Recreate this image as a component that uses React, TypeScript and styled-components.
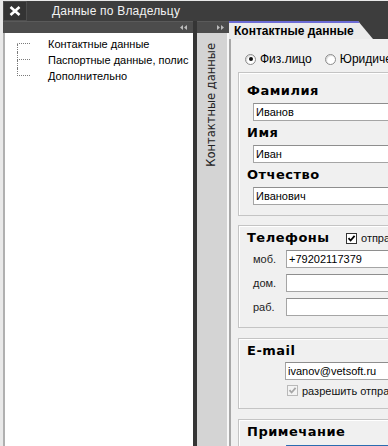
import React from 'react';
import styled, { createGlobalStyle } from 'styled-components';

const Global = createGlobalStyle`
  html, body { margin: 0; padding: 0; background: #e9e9e9; }
  body { font-family: "Liberation Sans", Arial, sans-serif; }
`;

const Window = styled.div`
  width: 388px;
  height: 446px;
  overflow: hidden;
  box-sizing: border-box;
  padding: 1px 0 0 3px;
  background: #e9e9e9;
  display: flex;
  flex-direction: column;
`;

const TitleBar = styled.div`
  flex: none;
  height: 20px;
  background: #3d3d3d;
  display: flex;
  align-items: center;
`;

const CloseBtn = styled.div`
  width: 24px;
  height: 20px;
  box-sizing: border-box;
  border: 1px solid #4d4d4d;
  background: #343434;
  display: flex;
  align-items: center;
  justify-content: center;
`;

const Title = styled.div`
  margin-left: 25px;
  color: #f2f2f2;
  font-size: 12px;
  letter-spacing: 0.2px;
`;

const Body = styled.div`
  flex: 1;
  min-height: 0;
  display: flex;
  background: #3d3d3d;
`;

const LeftPanel = styled.div`
  flex: none;
  width: 194px;
  box-sizing: border-box;
  border-right: 4px solid #353535;
  display: flex;
  flex-direction: column;
`;

const PanelHeader = styled.div<{ $align: 'start' | 'end' }>`
  flex: none;
  height: 12px;
  background: #4c4c4c;
  box-shadow: inset 0 1px 0 #5a5a5a;
  display: flex;
  align-items: center;
  justify-content: ${(p) => (p.$align === 'end' ? 'flex-end' : 'flex-start')};
  padding: 0 5px;
`;

const TreeArea = styled.div`
  flex: 1;
  background: #ffffff;
  border-left: 2px solid #b0b0b0;
  padding: 3px 0 0 12px;
  display: flex;
  flex-direction: column;
`;

const TreeItem = styled.div`
  height: 16px;
  display: flex;
  align-items: center;
  font-size: 11px;
  color: #000;
`;

const Connector = styled.div`
  flex: none;
  width: 13px;
  height: 16px;
  display: flex;
  flex-direction: column;
`;

const ConnTop = styled.div<{ $first?: boolean }>`
  height: 7px;
  border-left: 1px dotted ${(p) => (p.$first ? 'transparent' : '#7a7a7a')};
  border-bottom: 1px dotted #7a7a7a;
`;

const ConnBottom = styled.div<{ $last?: boolean }>`
  flex: 1;
  border-left: 1px dotted ${(p) => (p.$last ? 'transparent' : '#7a7a7a')};
`;

const TreeText = styled.span`
  margin-left: 18px;
  white-space: nowrap;
`;

const Strip = styled.div`
  flex: none;
  width: 32px;
  display: flex;
  flex-direction: column;
`;

const StripBody = styled.div`
  flex: 1;
  background: #d4d4d4;
  border-right: 2px solid #f8f8f8;
  display: flex;
  justify-content: center;
  padding-top: 10px;
`;

const VerticalText = styled.span`
  writing-mode: vertical-rl;
  transform: rotate(180deg);
  font-family: "DejaVu Sans", sans-serif;
  font-size: 11.5px;
  color: #222;
  white-space: nowrap;
  align-self: flex-start;
  margin-right: 2px;
`;

const ContentCol = styled.div`
  flex: 1;
  min-width: 0;
  display: flex;
  flex-direction: column;
  overflow: hidden;
`;

const TabRow = styled.div`
  flex: none;
  height: 18px;
  display: flex;
`;

const Tab = styled.div`
  width: 144px;
  height: 18px;
  box-sizing: border-box;
  border-top: 2px solid #6b6bd4;
  background: #ebebeb;
  clip-path: polygon(0 0, calc(100% - 15px) 0, 100% 100%, 0 100%);
  padding-left: 5px;
  font-weight: bold;
  font-size: 12px;
  line-height: 17px;
  color: #000;
  white-space: nowrap;
`;

const TabBody = styled.div`
  flex: 1;
  background: #f0f0f0;
  border-left: 2px solid #a8a8a8;
  padding: 13px 0 0 7px;
  display: flex;
  flex-direction: column;
`;

const RadioRow = styled.div`
  height: 14px;
  display: flex;
  align-items: center;
  padding-left: 7px;
  font-size: 12px;
  white-space: nowrap;
`;

const RadioOpt = styled.label`
  display: flex;
  align-items: center;
  gap: 4px;
  margin-right: 13px;
`;

const RadioCircle = styled.span<{ $checked?: boolean }>`
  width: 11px;
  height: 11px;
  box-sizing: border-box;
  border-radius: 50%;
  border: 1px solid #8c8c8c;
  background: #fff;
  box-shadow: inset 1px 1px 1px #d8d8d8;
  display: flex;
  align-items: center;
  justify-content: center;
  &::after {
    content: '';
    width: 4px;
    height: 4px;
    border-radius: 50%;
    background: ${(p) => (p.$checked ? '#111' : 'transparent')};
  }
`;

const Group = styled.div<{ $mt: number; $pt: number; $pb: number }>`
  width: 320px;
  flex: none;
  margin-top: ${(p) => p.$mt}px;
  border: 1px solid #c4c4c4;
  box-shadow: inset 1px 1px 0 #ffffff;
  padding: ${(p) => p.$pt}px 0 ${(p) => p.$pb}px 8px;
  display: flex;
  flex-direction: column;
`;

const FieldLabel = styled.div<{ $width?: number; $mt?: number }>`
  height: 16px;
  line-height: 16px;
  margin-top: ${(p) => p.$mt ?? 0}px;
  font-family: "DejaVu Sans", Verdana, sans-serif;
  font-weight: bold;
  font-size: 13px;
  letter-spacing: 0.5px;
  color: #000;
  flex: none;
  ${(p) => (p.$width ? `width: ${p.$width}px;` : '')}
`;

const Input = styled.div<{ $mt?: number; $ml: number; $focus?: boolean }>`
  margin-top: ${(p) => p.$mt ?? 0}px;
  margin-left: ${(p) => p.$ml}px;
  height: 18px;
  width: 220px;
  box-sizing: border-box;
  background: #fff;
  border: 1px solid ${(p) => (p.$focus ? '#3c7fc4' : '#a5a5a5')};
  border-top-color: ${(p) => (p.$focus ? '#2b6cb0' : '#8e8e8e')};
  padding-left: 2px;
  font-size: 11px;
  line-height: 16px;
  color: #000;
  white-space: nowrap;
  flex: none;
`;

const HeaderRow = styled.div`
  height: 16px;
  display: flex;
  align-items: center;
`;

const CheckLabel = styled.span`
  display: flex;
  align-items: center;
  gap: 4px;
  font-size: 11px;
  color: #111;
  white-space: nowrap;
`;

const CheckBox = styled.span<{ $disabled?: boolean }>`
  width: 11px;
  height: 11px;
  box-sizing: border-box;
  border: 1px solid ${(p) => (p.$disabled ? '#b9b9b9' : '#333')};
  background: ${(p) => (p.$disabled ? '#f3f3f3' : '#fff')};
  display: flex;
  align-items: center;
  justify-content: center;
  flex: none;
`;

const PhoneRow = styled.div<{ $mt: number }>`
  margin-top: ${(p) => p.$mt}px;
  padding-left: 6px;
  height: 18px;
  display: flex;
  align-items: center;
`;

const PhoneLabel = styled.span`
  width: 33px;
  flex: none;
  font-size: 11px;
  color: #222;
`;

const CheckRow = styled.div`
  margin-top: 4px;
  margin-left: 40px;
  height: 13px;
  display: flex;
  align-items: center;
`;

const Check = ({ disabled }: { disabled?: boolean }) => (
  <CheckBox $disabled={disabled}>
    <svg width="9" height="9" viewBox="0 0 9 9">
      <path
        d="M1.5 4.2 L3.6 6.5 L7.6 1.8"
        fill="none"
        stroke={disabled ? '#a6a6a6' : '#000'}
        strokeWidth="1.8"
      />
    </svg>
  </CheckBox>
);

const Arrows = ({ dir }: { dir: 'left' | 'right' }) => (
  <svg width="8" height="5" viewBox="0 0 8 5">
    {dir === 'left' ? (
      <>
        <polygon points="3,0 0,2.5 3,5" fill="#bcbcbc" />
        <polygon points="7,0 4,2.5 7,5" fill="#bcbcbc" />
      </>
    ) : (
      <>
        <polygon points="1,0 4,2.5 1,5" fill="#bcbcbc" />
        <polygon points="5,0 8,2.5 5,5" fill="#bcbcbc" />
      </>
    )}
  </svg>
);

const tree = ['Контактные данные', 'Паспортные данные, полис', 'Дополнительно'];

export default function App() {
  return (
    <>
      <Global />
      <Window>
        <TitleBar>
          <CloseBtn>
            <svg width="12" height="10" viewBox="0 0 12 10">
              <path d="M1.5 1 L10.5 9 M10.5 1 L1.5 9" stroke="#fff" strokeWidth="2.6" />
            </svg>
          </CloseBtn>
          <Title>Данные по Владельцу</Title>
        </TitleBar>
        <Body>
          <LeftPanel>
            <PanelHeader $align="end">
              <Arrows dir="left" />
            </PanelHeader>
            <TreeArea>
              {tree.map((t, i) => (
                <TreeItem key={t}>
                  <Connector>
                    <ConnTop $first={i === 0} />
                    <ConnBottom $last={i === tree.length - 1} />
                  </Connector>
                  <TreeText>{t}</TreeText>
                </TreeItem>
              ))}
            </TreeArea>
          </LeftPanel>
          <Strip>
            <PanelHeader $align="end">
              <Arrows dir="right" />
            </PanelHeader>
            <StripBody>
              <VerticalText>Контактные данные</VerticalText>
            </StripBody>
          </Strip>
          <ContentCol>
            <TabRow>
              <Tab>Контактные данные</Tab>
            </TabRow>
            <TabBody>
              <RadioRow>
                <RadioOpt>
                  <RadioCircle $checked />
                  Физ.лицо
                </RadioOpt>
                <RadioOpt>
                  <RadioCircle />
                  Юридическое лицо
                </RadioOpt>
              </RadioRow>

              <Group $mt={6} $pt={10} $pb={10}>
                <FieldLabel>Фамилия</FieldLabel>
                <Input $mt={4} $ml={6}>Иванов</Input>
                <FieldLabel $mt={4}>Имя</FieldLabel>
                <Input $mt={4} $ml={6}>Иван</Input>
                <FieldLabel $mt={4}>Отчество</FieldLabel>
                <Input $mt={4} $ml={6}>Иванович</Input>
              </Group>

              <Group $mt={9} $pt={4} $pb={11}>
                <HeaderRow>
                  <FieldLabel $width={99}>Телефоны</FieldLabel>
                  <CheckLabel>
                    <Check />
                    отправлять SMS
                  </CheckLabel>
                </HeaderRow>
                <PhoneRow $mt={4}>
                  <PhoneLabel>моб.</PhoneLabel>
                  <Input $ml={0}>+79202117379</Input>
                </PhoneRow>
                <PhoneRow $mt={6}>
                  <PhoneLabel>дом.</PhoneLabel>
                  <Input $ml={0} />
                </PhoneRow>
                <PhoneRow $mt={6}>
                  <PhoneLabel>раб.</PhoneLabel>
                  <Input $ml={0} />
                </PhoneRow>
              </Group>

              <Group $mt={10} $pt={4} $pb={11}>
                <FieldLabel>E-mail</FieldLabel>
                <Input $mt={3} $ml={38}>ivanov@vetsoft.ru</Input>
                <CheckRow>
                  <CheckLabel>
                    <Check disabled />
                    разрешить отправку
                  </CheckLabel>
                </CheckRow>
              </Group>

              <Group $mt={10} $pt={4} $pb={10}>
                <FieldLabel>Примечание</FieldLabel>
                <Input $mt={5} $ml={39} $focus />
              </Group>
            </TabBody>
          </ContentCol>
        </Body>
      </Window>
    </>
  );
}
